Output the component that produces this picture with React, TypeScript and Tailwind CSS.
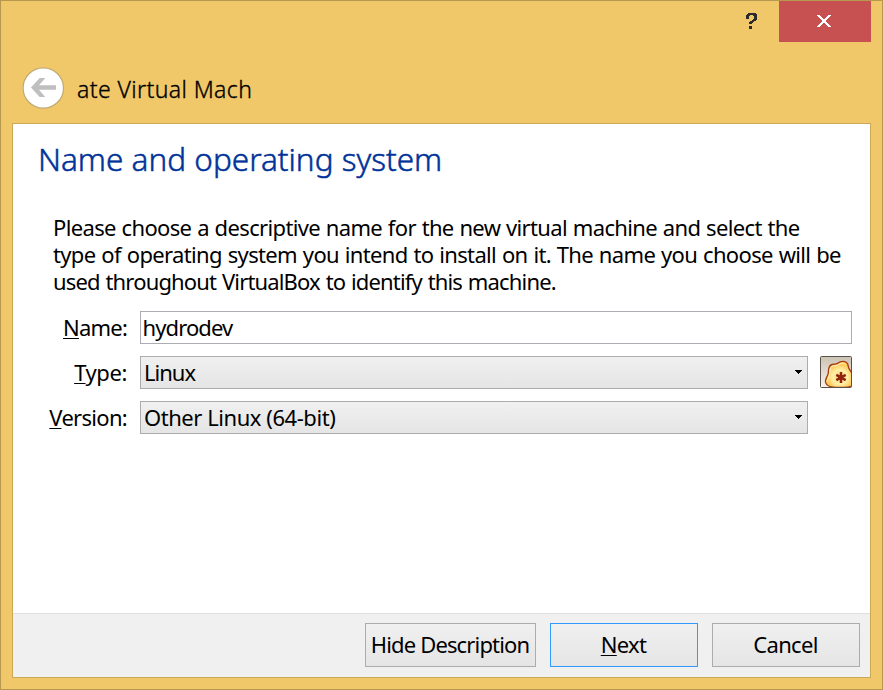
import React from 'react';

function BackButton() {
  return (
    <button aria-label="Back" className="block size-[43px] shrink-0">
      <svg width="43" height="43" viewBox="0 0 43 43">
        <circle cx="21.3" cy="21" r="20.2" fill="#fff" stroke="#c0aa74" strokeWidth="1.2" />
        <path d="M34 18.200V22.800H17l6.300 7.200h-5.600L9 20.500l8.700-9.500h5.600L17 18.200z" fill="#bfbfbf" />
      </svg>
    </button>
  );
}

function TitleButtons() {
  return (
    <div className="flex h-[41px] justify-end pr-[11px]">
      <button aria-label="Help" className="flex w-[55px] justify-center pt-[12px]">
        <svg width="11" height="16" viewBox="0 0 11 16" shapeRendering="crispEdges" fill="#2b2b2b">
          <path d="M2 0h8v1h1v6h-1v1H8v1H7v1H6v1H3V9h1V8h2V7h1V6h1V3H7V2H4v1H3v3H0V2h1V1h1zM3 13h3v3H3z" />
        </svg>
      </button>
      <button aria-label="Close" className="flex w-[92px] justify-center bg-[#c75050] pt-[14px] pr-[2px]">
        <svg width="14" height="12" viewBox="0 0 14 12" shapeRendering="crispEdges" fill="#fff">
          <path d="M0 0h3v1h1v1h1v1h1v1h2V3h1V2h1V1h1V0h3v1h-1v1h-1v1h-1v1h-1v1H9v2h1v1h1v1h1v1h1v1h1v1h-3v-1h-1v-1H9V9H8V8H6v1H5v1H4v1H3v1H0v-1h1v-1h1V9h1V8h1V7h1V5H4V4H3V3H2V2H1V1H0z" />
        </svg>
      </button>
    </div>
  );
}

function OsIcon() {
  return (
    <svg width="32" height="32" viewBox="0 0 32 32">
      <defs>
        <linearGradient id="tile" x1="0" y1="0" x2="0" y2="1">
          <stop offset="0" stopColor="#cbc3b3" />
          <stop offset="1" stopColor="#f6f3ee" />
        </linearGradient>
        <radialGradient id="blob" cx=".55" cy=".6" r=".6">
          <stop offset="0" stopColor="#ffd667" />
          <stop offset=".45" stopColor="#fff0a8" />
          <stop offset="1" stopColor="#ffb52e" />
        </radialGradient>
        <clipPath id="tileClip"><rect x="1" y="1" width="30" height="30" /></clipPath>
      </defs>
      <rect x=".5" y=".5" width="31" height="31" rx="1" fill="url(#tile)" stroke="#5b514b" />
      <g clipPath="url(#tileClip)">
        <path d="M5.500 26c-.5-4 2.500-5.500 2.800-9 .2-3.500-.3-7.500 3.700-8.500 2.500-.6 4 .2 6-1.500 3-2.500 8-2.200 9.500.5 1 2 .5 4 2 6 1.500 1.800 2.500 3 2.500 6V30c-2 1-4 1.500-8 1.500-8 0-17.500.5-18.500-5.500z" fill="url(#blob)" stroke="#a63a12" strokeWidth="1.300" />
        <path d="M7 26c0-3 2.600-5 2.900-8.500.2-3-.3-6.500 3-7.500 2.400-.6 4 0 6-1.600 2.400-2 6-1.700 7 .6" fill="none" stroke="#fff6d0" strokeWidth="1" />
      </g>
      <path d="M21 16v11M16.300 18.800l9.400 5.400M25.700 18.800l-9.400 5.400" stroke="#8f2410" strokeWidth="2.500" />
    </svg>
  );
}

function Hot({ children }: { children: React.ReactNode }) {
  return <span className="underline decoration-1 underline-offset-[2px]">{children}</span>;
}

function Label({ hot, rest, tracking }: { hot: string; rest: string; tracking: string }) {
  return (
    <label className={`w-[114px] text-right whitespace-nowrap ${tracking}`}>
      <Hot>{hot}</Hot>{rest}
    </label>
  );
}

function Select({ children }: { children: React.ReactNode }) {
  return (
    <div className="ml-[13px] flex h-[33px] w-[668px] items-center justify-between border border-[#acacac] bg-linear-to-b from-[#f0f0f0] to-[#e5e5e5] pr-[5px] pl-[3px]">
      {children}
      <svg className="-mt-px" width="7" height="4" viewBox="0 0 7 4" shapeRendering="crispEdges"><path d="M0 0h7v1H6v1H5v1H4v1H3V3H2V2H1V1H0z" /></svg>
    </div>
  );
}

function PushButton({ size, children }: { size: string; children: React.ReactNode }) {
  return (
    <button className={`flex h-[44px] items-center justify-center border bg-linear-to-b from-[#f0f0f0] to-[#e5e5e5] pr-px pb-[2px] whitespace-nowrap ${size}`}>
      <span>{children}</span>
    </button>
  );
}

export default function App() {
  return (
    <div className="flex h-[690px] w-[883px] flex-col border border-[#b6984f] bg-[#f0c869] font-['Noto_Sans',sans-serif] text-[22px] text-black">
      <TitleButtons />
      <header className="flex h-[81px] pt-[25px] pl-[21px]">
        <BackButton />
        <h1 className="ml-[12px] pt-[5px] text-[23px] leading-[34px] font-light tracking-[0.4px] whitespace-nowrap [-webkit-text-stroke:0.35px_black]">ate Virtual Mach</h1>
      </header>
      <div className="mx-[11px] flex h-[555px] flex-col border border-[#cba856] bg-white">
        <main className="h-[489px] pt-[14px]">
          <h2 className="ml-[25px] text-[31.5px] leading-[42px] font-light whitespace-nowrap text-[#003399] [-webkit-text-stroke:0.5px_#003399]">Name and operating system</h2>
          <div className="mt-[34px] ml-[40px] flex flex-col items-start leading-[27px] whitespace-nowrap">
            <span className="tracking-[-0.65px] [word-spacing:0.7px]">Please choose a descriptive name for the new virtual machine and select the</span>
            <span className="tracking-[-0.65px] [word-spacing:0.75px]">type of operating system you intend to install on it. The name you choose will be</span>
            <span className="tracking-[-0.84px] [word-spacing:0.9px]">used throughout VirtualBox to identify this machine.</span>
          </div>
          <form className="mt-[16px] flex flex-col gap-[12px]">
            <div className="flex h-[33px] items-center">
              <Label hot="N" rest="ame:" tracking="tracking-[-0.8px]" />
              <div className="ml-[13px] flex h-[33px] w-[712px] items-center border border-[#abadb3] pl-[1.5px]">
                <span className="tracking-[-0.9px]">hydrodev</span>
              </div>
            </div>
            <div className="flex h-[33px] items-center">
              <Label hot="T" rest="ype:" tracking="tracking-[-0.4px]" />
              <Select><span className="tracking-[-1px]">Linux</span></Select>
              <div className="ml-[12px] h-[33px]"><OsIcon /></div>
            </div>
            <div className="flex h-[33px] items-center">
              <Label hot="V" rest="ersion:" tracking="tracking-[-0.7px]" />
              <Select><span className="tracking-[-0.45px]">Other Linux (64-bit)</span></Select>
            </div>
          </form>
        </main>
        <footer className="flex h-[64px] items-start justify-end gap-[14px] border-t border-[#dfdfdf] bg-[#f0f0f0] pt-[9px] pr-[10px]">
          <PushButton size="w-[171px] border-[#acacac] tracking-[-0.85px]">Hide Description</PushButton>
          <PushButton size="w-[148px] border-[#3399ff] tracking-[-0.7px]"><Hot>N</Hot>ext</PushButton>
          <PushButton size="w-[148px] border-[#acacac] tracking-[-0.7px]">Cancel</PushButton>
        </footer>
      </div>
    </div>
  );
}
